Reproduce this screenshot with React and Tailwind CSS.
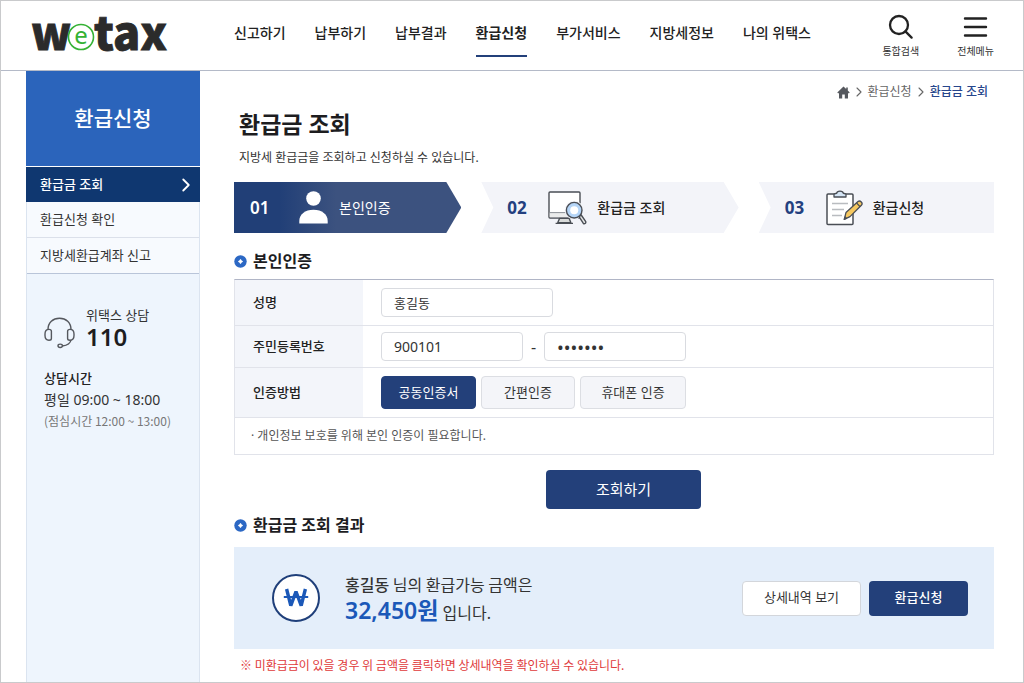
import React, { useState } from 'react';
import { ChevronRight } from 'lucide-react';

const NAV_ITEMS = ['신고하기', '납부하기', '납부결과', '환급신청', '부가서비스', '지방세정보', '나의 위택스'];

const SIDE_ITEMS = ['환급금 조회', '환급신청 확인', '지방세환급계좌 신고'];

const AUTH_METHODS = [
    { label: '공동인증서', width: 'w-[95px]' },
    { label: '간편인증', width: 'w-[94px]' },
    { label: '휴대폰 인증', width: 'w-[106px]' },
];

const INPUT = 'h-[29px] rounded border border-[#d9dbe0] bg-white px-3 text-[#333] outline-none';

function Logo() {
    return (
        <svg width="140" height="68" viewBox="0 0 140 68" role="img" aria-label="wetax">
            <g fill="#2b2b2b" stroke="#2b2b2b" strokeWidth="0.8" fontFamily="'Noto Sans CJK KR', sans-serif" fontWeight="900" fontSize="45">
                <text x="1" y="48">w</text>
                <text x="64" y="48">tax</text>
            </g>
            <circle cx="51" cy="35" r="12.5" fill="#fff" stroke="#35b234" strokeWidth="1.6" />
            <text x="51" y="42" textAnchor="middle" fill="#35b234" fontFamily="'Noto Sans', sans-serif" fontSize="24">e</text>
        </svg>
    );
}

function SearchIcon() {
    return (
        <svg width="26" height="26" viewBox="0 0 26 26" fill="none" stroke="#222" strokeWidth="2.3" aria-hidden="true">
            <circle cx="11" cy="12" r="9" />
            <path d="M17.4 18.4 23.6 24.6" strokeLinecap="round" />
        </svg>
    );
}

function MenuIcon() {
    return (
        <svg width="26" height="26" viewBox="0 0 26 26" stroke="#222" strokeWidth="2.4" strokeLinecap="round" aria-hidden="true">
            <path d="M2 5.5H23M2 14H23M2 22.5H23" />
        </svg>
    );
}

function HomeIcon() {
    return (
        <svg width="13" height="13" viewBox="0 0 13 13" fill="#55585e" aria-hidden="true">
            <path d="M6.5 0.5 0.3 6.4 1.2 7.4 2 6.8V12.4H5.2V8.6H7.8V12.4H11V6.8L11.8 7.4 12.7 6.4 10.8 4.6V1.6H9.2V3.1Z" />
        </svg>
    );
}

function HeadsetIcon() {
    return (
        <svg width="31" height="32" viewBox="0 0 31 32" fill="none" stroke="#55585e" strokeWidth="1.4" aria-hidden="true">
            <path d="M4 12.5C4 5.5 9 1.2 15.5 1.2S27 5.5 27 12.5" />
            <path d="M7.4 14.2C7.4 12.8 6.4 12.4 5 12.4C2.4 12.4 1 14.4 1 17V18.6C1 21.4 2.4 23.2 5 23.2C6.4 23.2 7.4 22.8 7.4 21.4Z" />
            <path d="M23.6 14.2C23.6 12.8 24.6 12.4 26 12.4C28.6 12.4 30 14.4 30 17V18.6C30 21.4 28.6 23.2 26 23.2C24.6 23.2 23.6 22.8 23.6 21.4Z" />
            <path d="M27 23C26.4 26.4 23 28.4 18.4 29" />
            <ellipse cx="16.2" cy="28.8" rx="2.2" ry="1.7" />
        </svg>
    );
}

function PersonIcon() {
    return (
        <svg width="29" height="33" viewBox="0 0 29 33" fill="#fff" aria-hidden="true">
            <circle cx="14.5" cy="7.5" r="7.3" />
            <path d="M0.3 32.5V30C0.3 23.5 6 18.8 14.5 18.8S28.7 23.5 28.7 30V32.5Z" />
        </svg>
    );
}

function MonitorIcon() {
    return (
        <svg width="39" height="34" viewBox="0 0 39 34" fill="none" stroke="#4a4e55" strokeWidth="1.4" strokeLinejoin="round" aria-hidden="true">
            <rect x="1" y="1" width="31" height="26" rx="1" fill="#fff" />
            <path d="M1.7 22H31.3V26.3H1.7Z" fill="#ebecec" stroke="none" />
            <path d="M1 21.6H20" stroke="#8c9097" strokeWidth="1" />
            <path d="M11.5 27.4 9.8 31.6H22.8L21.2 27.4Z" fill="#d8dad9" />
            <path d="M7.6 32.4H25" />
            <circle cx="26.2" cy="19.2" r="9.4" fill="#f3f4f9" stroke="none" />
            <path d="M31 25.6 33.2 24 37.6 30.4C38.4 32.2 36.4 33.6 35.2 32.2Z" fill="#e3e4e4" />
            <circle cx="26.2" cy="19.2" r="7.8" fill="#b5d5f7" />
            <circle cx="26.2" cy="19.2" r="4" fill="#fff" stroke="none" />
        </svg>
    );
}

function ClipboardIcon() {
    return (
        <svg width="37" height="36" viewBox="0 0 37 36" fill="none" stroke="#4a4e55" strokeWidth="1.5" strokeLinejoin="round" aria-hidden="true">
            <rect x="1" y="4" width="26" height="30.5" rx="1" fill="#fff" />
            <path d="M8 7V4.6C8 3.4 9 3.6 10.6 3.4 11 0.4 17 0.4 17.4 3.4 19 3.6 20 3.4 20 4.6V7Z" fill="#d5e5f5" strokeWidth="1.3" />
            <path d="M6 13.5H22M6 19.5H18M6 25.5H16" stroke="#b9bcc0" strokeWidth="1.4" />
            <path d="M18.2 29.4 20 22.6 32 11.6C34.2 9.8 37.4 13.2 35.4 15.2L24 26.6Z" fill="#f6c860" strokeWidth="1.3" />
            <path d="M30.6 13 34 16.6" strokeWidth="1.2" />
            <path d="M18.2 29.4 19 26.6 21 28.4Z" fill="#4a4e55" strokeWidth="0.8" />
        </svg>
    );
}

function WonIcon() {
    return (
        <svg width="48" height="48" viewBox="0 0 48 48" fill="none" aria-hidden="true">
            <circle cx="24" cy="24" r="23" fill="#fff" stroke="#1f3f7a" strokeWidth="2" />
            <path d="M14.6 15 18.8 31.6 24 17.5 29.2 31.6 33.4 15" stroke="#1b58b8" strokeWidth="3.4" strokeLinejoin="bevel" />
            <path d="M11.8 23H36.2" stroke="#1b58b8" strokeWidth="2" />
        </svg>
    );
}

function SectionTitle({ children, className }) {
    return (
        <h2 className={`flex items-center gap-[6px] text-base leading-6 font-bold text-[#1d1d1f] ${className}`}>
            <svg width="13" height="13" viewBox="0 0 13 13" aria-hidden="true">
                <circle cx="6.5" cy="6.5" r="6.2" fill="#2c68c4" />
                <path d="M6.5 4.2 7.4 5.6 8.8 6.5 7.4 7.4 6.5 8.8 5.6 7.4 4.2 6.5 5.6 5.6Z" fill="#fff" stroke="#fff" strokeWidth="0.6" />
            </svg>
            {children}
        </h2>
    );
}

function FormRow({ label, htmlFor, className, children }) {
    return (
        <div className={`flex border-b border-[#e1e3ea] ${className}`}>
            <div className="flex w-[128px] shrink-0 items-center bg-[#f3f5fa] pl-[18px] text-[13px] font-medium text-[#222]">
                {htmlFor ? <label htmlFor={htmlFor}>{label}</label> : <span id="auth-label">{label}</span>}
            </div>
            <div className="flex flex-1 items-center pl-[18px]">{children}</div>
        </div>
    );
}

export default function App() {
    const [name, setName] = useState('홍길동');
    const [front, setFront] = useState('900101');
    const [back, setBack] = useState('1234567');
    const [method, setMethod] = useState('공동인증서');

    return (
        <div className="flex min-h-screen flex-col border border-[#c9cacc] bg-white font-['Noto_Sans','Noto_Sans_CJK_KR',sans-serif] text-[#333]">
            {/* Header */}
            <header className="flex h-[70px] items-center border-b border-[#b4bac8] pr-[29px] pl-[29px]">
                <a href="#" className="block shrink-0">
                    <Logo />
                </a>
                <nav className="ml-[64px] flex h-full items-start gap-[29px] pt-[22px] text-[14px] leading-5 font-medium whitespace-nowrap text-[#222]">
                    {NAV_ITEMS.map((item) => (
                        <a
                            key={item}
                            href="#"
                            className={item === '환급신청' ? 'border-b-2 border-[#23407a] pb-3 font-bold' : ''}
                        >
                            {item}
                        </a>
                    ))}
                </nav>
                <div className="ml-auto flex items-start gap-[38px] text-[10px] leading-4 text-[#333]">
                    <button type="button" className="flex flex-col items-center gap-[4px]">
                        <SearchIcon />
                        통합검색
                    </button>
                    <button type="button" className="flex flex-col items-center gap-[4px]">
                        <MenuIcon />
                        전체메뉴
                    </button>
                </div>
            </header>

            <div className="flex flex-1 pr-[29px] pl-[25px]">
                {/* Side menu */}
                <aside className="w-[174px] shrink-0 border-x border-[#dbe4f0] bg-[#eef5fd]">
                    <h2 className="-mx-px flex h-[95px] items-center justify-center bg-[#2b64bb] text-[21px] font-medium text-white">
                        환급신청
                    </h2>
                    <ul className="text-[13px]">
                        {SIDE_ITEMS.map((item, i) => (
                            <li key={item}>
                                {i === 0 ? (
                                    <a href="#" className="-mx-px flex h-[36px] items-center justify-between border-t border-white bg-[#0f3770] pr-[3px] pl-[14px] font-medium text-white">
                                        {item}
                                        <ChevronRight className="h-[22px] w-[22px]" />
                                    </a>
                                ) : (
                                    <a href="#" className={`flex h-[36px] items-center border-b bg-[#f7fafe] pl-[13px] ${i === 1 ? 'border-[#dbe0ea]' : 'border-[#b9c5d9]'}`}>
                                        {item}
                                    </a>
                                )}
                            </li>
                        ))}
                    </ul>
                    <div className="px-[17px] pt-[31px]">
                        <div className="flex items-end gap-[11px]">
                            <HeadsetIcon />
                            <div>
                                <p className="text-[13px] leading-5">위택스 상담</p>
                                <p className="text-2xl leading-6 font-semibold text-[#1d1d1f]">110</p>
                            </div>
                        </div>
                        <p className="mt-[18px] text-[13px] leading-[22px] font-medium text-[#222]">상담시간</p>
                        <p className="text-[14px] leading-[22px]">평일 09:00 ~ 18:00</p>
                        <p className="font-['Noto_Sans_CJK_KR',sans-serif] text-[12px] leading-5 text-[#777]">(점심시간 12:00 ~ 13:00)</p>
                    </div>
                </aside>

                <main className="min-w-0 flex-1 pt-[13px] pb-[7px] pl-[34px]">
                    <nav className="flex items-center justify-end gap-px pr-[6px] text-[12px] leading-4 text-[#666]">
                        <HomeIcon />
                        <ChevronRight className="h-4 w-4" strokeWidth={1.6} />
                        <a href="#">환급신청</a>
                        <ChevronRight className="h-4 w-4" strokeWidth={1.6} />
                        <a href="#" className="font-medium text-[#27468c]">환급금 조회</a>
                    </nav>

                    <h1 className="mt-2 pl-[5px] text-[23px] leading-8 font-bold text-[#1d1d1f]">환급금 조회</h1>
                    <p className="mt-2 pl-[5px] text-[12px] leading-5">지방세 환급금을 조회하고 신청하실 수 있습니다.</p>

                    {/* Steps */}
                    <ol className="mt-[14px] grid h-[51px] grid-cols-[227fr_257fr_235fr] gap-5 text-[14px] font-medium text-[#222]">
                        <li className="flex items-center bg-linear-to-r from-[#213f77] from-20% to-[#3c527f] to-45% pl-4 text-white [clip-path:polygon(0_0,calc(100%-15px)_0,100%_50%,calc(100%-15px)_100%,0_100%)]">
                            <span className="w-[49px] text-[17px] font-semibold">01</span>
                            <PersonIcon />
                            <span className="ml-[11px] font-normal">본인인증</span>
                        </li>
                        <li className="flex items-center bg-[#f3f4f9] pl-[26px] [clip-path:polygon(0_0,calc(100%-15px)_0,100%_50%,calc(100%-15px)_100%,0_100%,12px_50%)]">
                            <span className="w-[41px] text-[17px] font-bold text-[#23407f]">02</span>
                            <MonitorIcon />
                            <span className="ml-[10px]">환급금 조회</span>
                        </li>
                        <li className="flex items-center bg-[#f3f4f9] pl-[26px] [clip-path:polygon(0_0,100%_0,100%_100%,0_100%,12px_50%)]">
                            <span className="w-[41px] text-[17px] font-bold text-[#23407f]">03</span>
                            <ClipboardIcon />
                            <span className="ml-[10px]">환급신청</span>
                        </li>
                    </ol>

                    <form onSubmit={(e) => e.preventDefault()}>
                        <SectionTitle className="mt-4">본인인증</SectionTitle>
                        <div className="mt-[6px] border border-t-[#b0b5c6] border-[#e1e3ea]">
                            <FormRow label="성명" htmlFor="name" className="h-[46px]">
                                <input id="name" className={`${INPUT} w-[172px] text-[13px]`} value={name} onChange={(e) => setName(e.target.value)} />
                            </FormRow>
                            <FormRow label="주민등록번호" htmlFor="front" className="h-[42px]">
                                <input id="front" className={`${INPUT} w-[142px] text-[14px]`} value={front} onChange={(e) => setFront(e.target.value)} />
                                <span className="w-[21px] text-center">-</span>
                                <input
                                    type="password"
                                    aria-label="주민등록번호 뒷자리"
                                    className={`${INPUT} w-[142px] text-[18px]`}
                                    value={back}
                                    onChange={(e) => setBack(e.target.value)}
                                />
                            </FormRow>
                            <FormRow label="인증방법" className="h-[50px]">
                                <div role="group" aria-labelledby="auth-label" className="flex gap-[5px] text-[13px]">
                                    {AUTH_METHODS.map((m) => (
                                        <button
                                            key={m.label}
                                            type="button"
                                            aria-pressed={method === m.label}
                                            onClick={() => setMethod(m.label)}
                                            className={`h-[33px] rounded border ${m.width} ${method === m.label ? 'border-[#23407a] bg-[#23407a] text-white' : 'border-[#dcdee3] bg-[#f4f5f9]'}`}
                                        >
                                            {m.label}
                                        </button>
                                    ))}
                                </div>
                            </FormRow>
                            <p className="flex h-[36px] items-center pl-4 text-[12px] text-[#555]">· 개인정보 보호를 위해 본인 인증이 필요합니다.</p>
                        </div>
                        <div className="mt-[15px] flex justify-center pl-[19px]">
                            <button type="submit" className="h-[39px] w-[155px] rounded bg-[#23407a] text-[15px] text-white">
                                조회하기
                            </button>
                        </div>
                    </form>

                    {/* Result */}
                    <SectionTitle className="mt-1">환급금 조회 결과</SectionTitle>
                    <section className="mt-[10px] flex h-[102px] items-center bg-[#e4eefa] pr-[26px] pl-[38px]">
                        <WonIcon />
                        <div className="ml-[25px] text-[16px] leading-[26px] text-[#333]">
                            <p className="font-['Noto_Sans_CJK_KR',sans-serif]"><span className="font-medium">홍길동</span> 님의 환급가능 금액은</p>
                            <p><strong className="text-[23px] leading-[26px] font-semibold text-[#1b58b8]">32,450원</strong> 입니다.</p>
                        </div>
                        <div className="ml-auto flex gap-2 text-[13px]">
                            <button type="button" className="h-[35px] w-[119px] rounded border border-[#d3d6db] bg-white">상세내역 보기</button>
                            <button type="button" className="h-[35px] w-[99px] rounded bg-[#23407a] font-medium text-white">환급신청</button>
                        </div>
                    </section>
                    <p className="mt-[6px] pl-[6px] font-['Noto_Sans_CJK_KR',sans-serif] text-[12px] leading-5 text-[#e03a3a]">※ 미환급금이 있을 경우 위 금액을 클릭하면 상세내역을 확인하실 수 있습니다.</p>
                </main>
            </div>
        </div>
    );
}
